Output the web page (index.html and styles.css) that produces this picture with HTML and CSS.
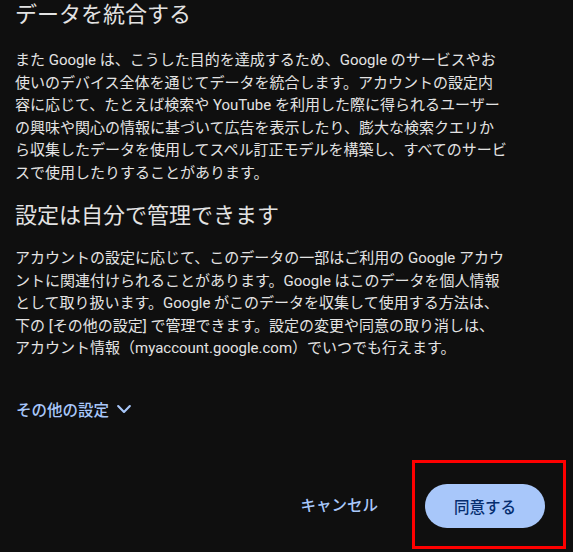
FILE: index.html
```html
<!DOCTYPE html>
<html lang="ja">
  <head>
    <meta charset="UTF-8" />
    <meta name="viewport" content="width=device-width, initial-scale=1.0" />
    <title>データを統合する</title>
    <link rel="stylesheet" href="styles.css">
  </head>
  <body>
    <div class="dialog">
      <h2 class="title">データを統合する</h2>
      <p class="text">
        また Google は、こうした目的を達成するため、Google のサービスやお<br />
        使いのデバイス全体を通じてデータを統合します。アカウントの設定内<br />
        容に応じて、たとえば検索や YouTube を利用した際に得られるユーザー<br />
        の興味や関心の情報に基づいて広告を表示したり、膨大な検索クエリか<br />
        ら収集したデータを使用してスペル訂正モデルを構築し、すべてのサービ<br />
        スで使用したりすることがあります。
      </p>

      <h2 class="title second">設定は自分で管理できます</h2>
      <p class="text second">
        アカウントの設定に応じて、このデータの一部はご利用の Google アカウ<br />
        ントに関連付けられることがあります。Google はこのデータを個人情報<br />
        として取り扱います。Google がこのデータを収集して使用する方法は、<br />
        下の [その他の設定] で管理できます。設定の変更や同意の取り消しは、<br />
        アカウント情報（myaccount.google.com）でいつでも行えます。
      </p>

      <button class="more">
        その他の設定
        <svg width="20" height="20" viewBox="0 0 24 24">
          <path d="M5 8.5l7 7 7-7" fill="none" stroke="currentColor" stroke-width="2.6" stroke-linecap="round" stroke-linejoin="round" />
        </svg>
      </button>

      <div class="actions">
        <button class="btn-text">キャンセル</button>
        <div class="highlight">
          <button class="btn-filled">同意する</button>
        </div>
      </div>
    </div>
  </body>
</html>
```

FILE: styles.css
```css
body {
  margin: 0;
  padding: 0;
  background-color: #0f0f0f;
  color: #e3e3e3;
  font-family: Roboto, "Noto Sans CJK JP", sans-serif;
}

.dialog {
  width: 573px;
  height: 552px;
  box-sizing: border-box;
  padding: 1px 7px 0 15px;
}

.title {
  margin: 0;
  font-size: 22px;
  font-weight: 400;
  line-height: 28px;
}

.title.second {
  margin-top: 18px;
}

.text {
  margin: 20px 0 0;
  font-size: 15px;
  line-height: 22.5px;
  white-space: nowrap;
}

.text.second {
  margin-top: 17px;
}

.more {
  display: flex;
  align-items: center;
  gap: 5px;
  margin-top: 37px;
  padding: 0 0 0 1px;
  height: 24px;
  background: none;
  border: none;
  color: #a8c7fa;
  font-family: inherit;
  font-size: 15.5px;
  font-weight: 500;
  cursor: pointer;
}

.actions {
  display: flex;
  justify-content: flex-end;
  align-items: center;
  gap: 22px;
  margin-top: 39px;
}

.btn-text {
  padding: 10px 12px;
  background: none;
  border: none;
  color: #a8c7fa;
  font-family: inherit;
  font-size: 15.5px;
  font-weight: 500;
  cursor: pointer;
}

.highlight {
  border: 3px solid #ff0000;
  padding: 21px 18px 18px 10px;
}

.btn-filled {
  display: block;
  width: 120px;
  height: 44px;
  border: none;
  border-radius: 22px;
  background-color: #a8c7fa;
  color: #062e6f;
  font-family: inherit;
  font-size: 15.5px;
  font-weight: 500;
  cursor: pointer;
}
```
